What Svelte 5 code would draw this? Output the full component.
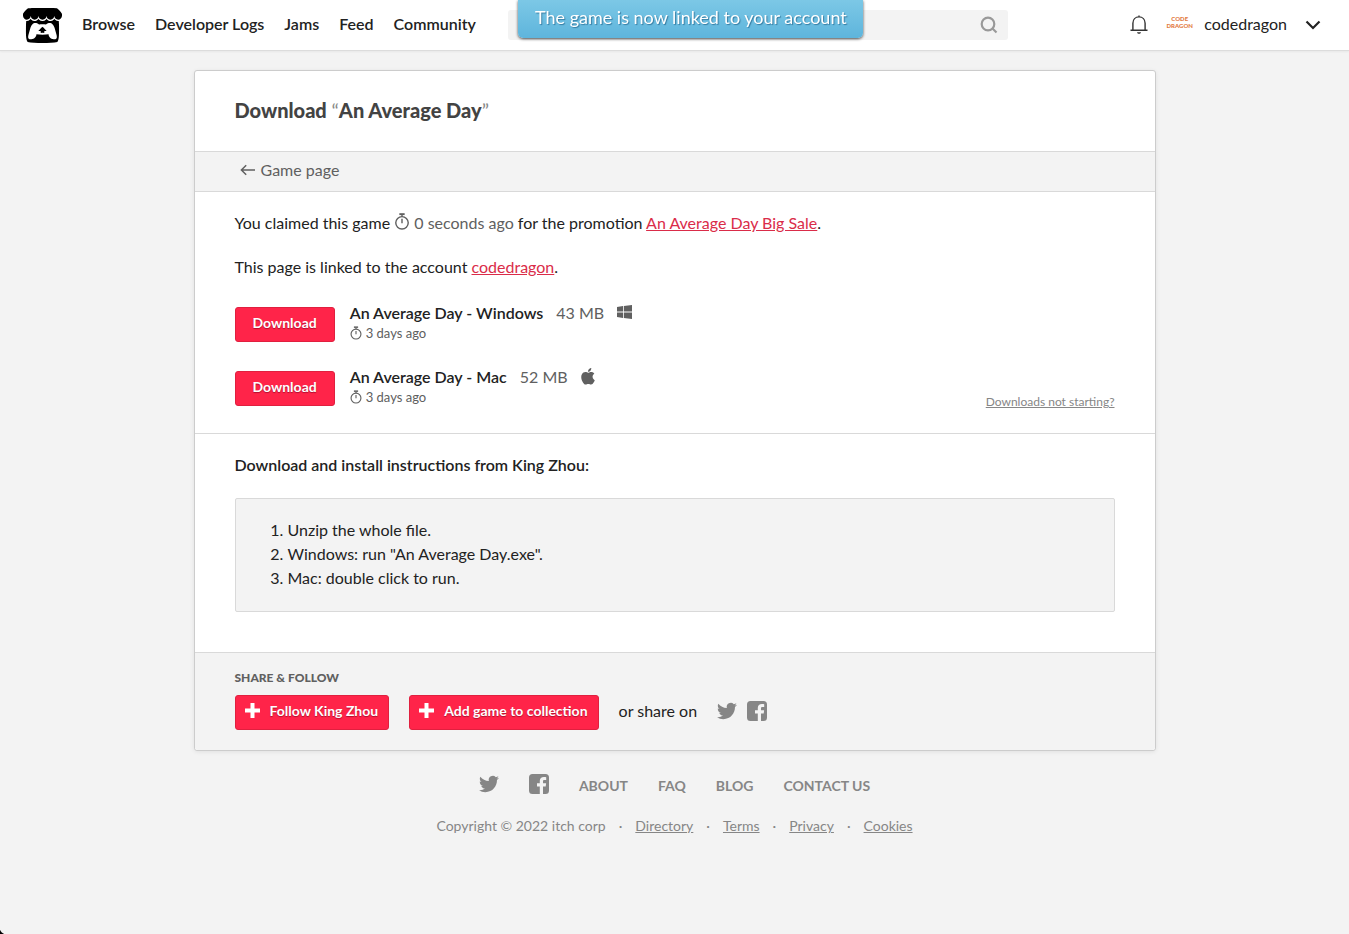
<script>
  const nav = ['Browse', 'Developer Logs', 'Jams', 'Feed', 'Community'];
  const uploads = [
    { name: 'An Average Day - Windows', size: '43 MB', platform: 'windows' },
    { name: 'An Average Day - Mac', size: '52 MB', platform: 'apple' }
  ];
  const steps = ['Unzip the whole file.', 'Windows: run "An Average Day.exe".', 'Mac: double click to run.'];
  const footerLinks = ['About', 'FAQ', 'Blog', 'Contact us'];
  const legalLinks = ['Directory', 'Terms', 'Privacy', 'Cookies'];
</script>

{#snippet stopwatch()}
  <svg class="stopwatch" viewBox="0 0 16 18" aria-hidden="true">
    <g fill="none" stroke="currentColor" stroke-width="1.5">
      <circle cx="8" cy="10.4" r="6.6" />
      <path d="M8 6.2v4.6M8 1.5v2.6" />
      <path d="M5.2 1.2h5.600" stroke-width="2" />
    </g>
  </svg>
{/snippet}

{#snippet twitter()}
  <svg class="social" viewBox="0 0 24 24" fill="currentColor" aria-hidden="true">
    <path d="M23.953 4.57a10 10 0 01-2.825.775 4.958 4.958 0 002.163-2.723c-.951.555-2.005.959-3.127 1.184a4.92 4.92 0 00-8.384 4.482C7.69 8.095 4.067 6.13 1.64 3.162a4.822 4.822 0 00-.666 2.475c0 1.71.87 3.213 2.188 4.096a4.904 4.904 0 01-2.228-.616v.06a4.923 4.923 0 003.946 4.827 4.996 4.996 0 01-2.212.085 4.936 4.936 0 004.604 3.417 9.867 9.867 0 01-6.102 2.105c-.39 0-.779-.023-1.17-.067a13.995 13.995 0 007.557 2.209c9.053 0 13.998-7.496 13.998-13.985 0-.21 0-.42-.015-.63A9.935 9.935 0 0024 4.59z" />
  </svg>
{/snippet}

{#snippet facebook()}
  <svg class="social" viewBox="0 0 20 20" fill="currentColor" aria-hidden="true">
    <path d="M3.5 0h13A3.5 3.5 0 0 1 20 3.5v13a3.5 3.5 0 0 1-3.5 3.5H14v-7.6h2.7l.4-3.1H14V7.4c0-.9.4-1.4 1.5-1.4h1.7V3.2c-.4-.1-1.300-.2-2.300-.2-2.500 0-4.100 1.500-4.100 4.100v2.200H8v3.100h2.800V20H3.500A3.500 3.500 0 0 1 0 16.500v-13A3.500 3.500 0 0 1 3.500 0z" />
  </svg>
{/snippet}

{#snippet plus()}
  <svg class="plus" viewBox="0 0 15 15" fill="currentColor" aria-hidden="true">
    <path d="M5.500 0h4v5.500H15v4H9.500V15h-4V9.500H0v-4h5.500z" />
  </svg>
{/snippet}

<header class="topbar">
  <a class="logo" href="#home" aria-label="itch.io">
    <svg viewBox="0 1.2 24 21.6" preserveAspectRatio="none" aria-hidden="true">
      <path d="M3.13 1.338C2.08 1.96.02 4.328 0 4.95v1.03c0 1.303 1.22 2.45 2.325 2.45 1.33 0 2.436-1.102 2.436-2.41 0 1.308 1.07 2.41 2.4 2.41 1.328 0 2.362-1.102 2.362-2.41 0 1.308 1.137 2.41 2.466 2.41h.024c1.33 0 2.466-1.102 2.466-2.41 0 1.308 1.034 2.41 2.363 2.41 1.33 0 2.4-1.102 2.4-2.41 0 1.308 1.106 2.41 2.435 2.41C22.78 8.43 24 7.282 24 5.98V4.95c-.02-.62-2.08-2.99-3.13-3.612-3.253-.114-5.508-.134-8.87-.133-3.362 0-7.945.053-8.87.133zm6.376 6.477a2.74 2.74 0 0 1-.468.602c-.5.49-1.19.795-1.947.795a2.786 2.786 0 0 1-1.95-.795c-.182-.178-.32-.37-.446-.59-.127.222-.303.412-.486.59a2.788 2.788 0 0 1-1.95.795c-.092 0-.187-.025-.264-.052-.107 1.113-.152 2.176-.168 2.95v.005l-.006 1.167c.02 2.334-.23 7.564 1.03 8.85 1.952.454 5.545.662 9.15.663 3.605 0 7.198-.21 9.15-.664 1.26-1.284 1.01-6.514 1.03-8.848l-.006-1.167v-.004c-.016-.775-.06-1.838-.168-2.95-.077.026-.172.052-.263.052a2.788 2.788 0 0 1-1.95-.795c-.184-.178-.36-.368-.486-.59-.127.22-.265.412-.447.59a2.786 2.786 0 0 1-1.95.794c-.76 0-1.446-.303-1.948-.793a2.74 2.74 0 0 1-.468-.602 2.738 2.738 0 0 1-.463.602 2.787 2.787 0 0 1-1.95.794h-.16a2.787 2.787 0 0 1-1.95-.793 2.738 2.738 0 0 1-.464-.602zm-2.004 2.59v.002c.795.002 1.5 0 2.373.953.687-.072 1.406-.108 2.125-.107.72 0 1.438.035 2.125.107.873-.953 1.578-.95 2.372-.953.376 0 1.876 0 2.92 2.934l1.123 4.028c.832 2.995-.266 3.068-1.636 3.07-2.03-.075-3.156-1.55-3.156-3.025-1.124.184-2.436.276-3.748.277-1.312 0-2.624-.093-3.748-.277 0 1.475-1.125 2.95-3.156 3.026-1.37-.004-2.468-.077-1.636-3.072l1.122-4.027c1.045-2.934 2.545-2.934 2.92-2.934zM12 12.714c-.002.002-2.14 1.964-2.523 2.662l1.4-.056v1.22c0 .056.56.033 1.123.007.562.026 1.124.05 1.124-.008v-1.22l1.4.055C14.138 14.677 12 12.713 12 12.713z" />
    </svg>
  </a>
  <nav>
    {#each nav as item}<a href="#{item}">{item}</a>{/each}
  </nav>
  <form class="search">
    <input type="text" aria-label="Search" />
    <button type="button" aria-label="Submit search">
      <svg viewBox="0 0 18 18" width="18" height="18" fill="none" stroke="#999" stroke-width="2.2" aria-hidden="true">
        <circle cx="8" cy="8" r="6.300" /><path d="M12.500 12.500l4 4" />
      </svg>
    </button>
  </form>
  <div class="user">
    <button class="bell" type="button" aria-label="Notifications">
      <svg viewBox="0 0 18 20" width="18" height="20" fill="none" stroke="#333" stroke-width="1.4" aria-hidden="true">
        <path d="M0.500 15.300h17M2.900 15.300V8.200C2.900 4.500 5.500 1.900 9 1.900s6.100 2.600 6.100 6.300v7.100M9 .6v1.300" />
        <path d="M7 17.300h4c-.3 1-1 1.500-2 1.500s-1.700-.5-2-1.500z" fill="#333" stroke="none" />
      </svg>
    </button>
    <a class="account" href="#account">
      <span class="avatar"><span>CODE</span><span>DRAGON</span></span>
      <span class="username">codedragon</span>
    </a>
    <button class="more" type="button" aria-label="Account menu">
      <svg viewBox="0 0 16 10" width="16" height="10" fill="none" stroke="#222" stroke-width="2.200" aria-hidden="true">
        <path d="M1.500 1.500L8 8l6.500-6.500" />
      </svg>
    </button>
  </div>
</header>

<div class="toast" role="status">The game is now linked to your account</div>

<main class="card">
  <h1>Download <span>“</span>An Average Day<span>”</span></h1>
  <div class="back">
    <a href="#game">
      <svg viewBox="0 0 15 12" width="15" height="12" fill="none" stroke="currentColor" stroke-width="1.500" aria-hidden="true">
        <path d="M15 6H1.500M6.200 1.200L1.400 6l4.800 4.800" />
      </svg>
      Game page
    </a>
  </div>

  <section class="downloads">
    <p>You claimed this game <span class="ago">{@render stopwatch()} 0 seconds ago</span> for the promotion <a href="#sale">An Average Day Big Sale</a>.</p>
    <p>This page is linked to the account <a href="#account">codedragon</a>.</p>
    <div class="uploads">
      <div class="list">
        {#each uploads as upload}
          <div class="upload">
            <button class="button" type="button">Download</button>
            <div class="info">
              <div class="title">
                <strong>{upload.name}</strong>
                <span class="size">{upload.size}</span>
                {#if upload.platform === 'windows'}
                  <svg viewBox="0 0 15 16" width="15" height="16" fill="currentColor" role="img" aria-label="Windows">
                    <path d="M0 2l6-.9v5.500H0zM6.800 1L15 0v6.600H6.800zM0 7.400h6v5.500L0 12zM6.800 7.400H15V14l-8.200-1z" />
                  </svg>
                {:else}
                  <svg viewBox="2 0 20 26" width="14" height="18" fill="currentColor" role="img" aria-label="Mac">
                    <path d="M12.152 6.896c-.948 0-2.415-1.078-3.96-1.04-2.04.027-3.91 1.183-4.961 3.014-2.117 3.675-.546 9.103 1.519 12.09 1.013 1.454 2.208 3.09 3.792 3.039 1.52-.065 2.09-.987 3.935-.987 1.831 0 2.35.987 3.96.948 1.637-.026 2.676-1.48 3.676-2.948 1.156-1.688 1.636-3.325 1.662-3.415-.039-.013-3.182-1.221-3.22-4.857-.026-3.04 2.48-4.494 2.597-4.559-1.429-2.09-3.623-2.324-4.39-2.376-2-.156-3.675 1.09-4.61 1.09zM15.53 3.83c.843-1.012 1.4-2.427 1.245-3.83-1.207.052-2.662.805-3.532 1.818-.78.896-1.454 2.338-1.273 3.714 1.338.104 2.715-.688 3.559-1.701" />
                  </svg>
                {/if}
              </div>
              <div class="date">{@render stopwatch()} 3 days ago</div>
            </div>
          </div>
        {/each}
      </div>
      <a class="help" href="#help">Downloads not starting?</a>
    </div>
  </section>

  <section class="instructions">
    <h2>Download and install instructions from King Zhou:</h2>
    <ol>
      {#each steps as step}<li>{step}</li>{/each}
    </ol>
  </section>

  <section class="share">
    <h3>Share &amp; Follow</h3>
    <div class="share-row">
      <button class="button with-icon" type="button">{@render plus()}Follow King Zhou</button>
      <button class="button with-icon" type="button">{@render plus()}Add game to collection</button>
      <span>or share on</span>
      <div class="share-icons">
        <a href="#twitter" aria-label="Share on Twitter">{@render twitter()}</a>
        <a href="#facebook" aria-label="Share on Facebook">{@render facebook()}</a>
      </div>
    </div>
  </section>
</main>

<footer>
  <div class="primary">
    <a href="#twitter" aria-label="Twitter">{@render twitter()}</a>
    <a href="#facebook" aria-label="Facebook">{@render facebook()}</a>
    {#each footerLinks as link}<a href="#{link}">{link}</a>{/each}
  </div>
  <div class="legal">
    <span>Copyright © 2022 itch corp</span>
    {#each legalLinks as link}
      <span>·</span><a href="#{link}">{link}</a>
    {/each}
  </div>
</footer>
<div class="corner"></div>

<style>
  :global(body) {
    margin: 0;
    background: #f3f3f3;
    color: #222;
    font-family: Lato, sans-serif;
    font-size: 16px;
    line-height: 24px;
  }
  a { color: inherit; text-decoration: none; }
  button { font-family: inherit; cursor: pointer; }
  svg { flex: none; }

  .topbar {
    display: flex;
    align-items: center;
    height: 50px;
    padding: 0 28px 0 23px;
    background: #fff;
    border-bottom: 1px solid #dcdcdc;
    box-shadow: 0 1px 2px rgba(0, 0, 0, 0.05);
  }
  .logo svg { display: block; width: 39px; height: 35px; }
  nav { display: flex; gap: 20px; margin: 0 32px 0 20px; padding-bottom: 2px; font-weight: 600; white-space: nowrap; }
  .search {
    display: flex;
    flex: 0 1 500px;
    height: 30px;
    background: #f3f3f3;
    border-radius: 3px;
  }
  .search input { flex: 1; min-width: 0; border: 0; background: transparent; }
  .search button, .bell, .more { display: flex; align-items: center; padding: 0; border: 0; background: none; }
  .search button { padding: 0 10px; }
  .user { display: flex; align-items: center; margin-left: auto; }
  .account { display: flex; align-items: center; gap: 12px; margin: 0 18px 0 19px; }
  .username { padding-bottom: 2px; }
  .avatar {
    display: flex;
    flex-direction: column;
    align-items: center;
    width: 25px;
    padding-bottom: 6px;
    color: #e27a3f;
    font-size: 6px;
    font-weight: 900;
    line-height: 7px;
  }

  .toast {
    position: fixed;
    top: 0;
    left: 518px;
    padding: 5px 16px 9px 17px;
    background: linear-gradient(#7cc8e6, #5eb5dc);
    border-radius: 0 0 5px 5px;
    box-shadow: 0 1px 3px rgba(0, 0, 0, 0.7);
    color: #fff;
    font-size: 18px;
    text-shadow: 1px 1px 1px rgba(0, 60, 100, 0.5);
  }

  .card {
    max-width: 960px;
    margin: 19px auto 0;
    background: #fff;
    border: 1px solid #ccc;
    border-radius: 3px;
    box-shadow: 0 1px 4px rgba(0, 0, 0, 0.08);
  }
  h1 {
    margin: 0;
    padding: 27px 40px 29px;
    color: #434343;
    font-size: 20px;
    font-weight: 900;
    line-height: 24px;
  }
  h1 span { color: #888; font-weight: 400; }
  .back { padding: 6px 45px 9px; background: #f3f3f3; border: solid #d9d9d9; border-width: 1px 0; color: #606060; }
  .back a { display: inline-flex; align-items: center; gap: 6px; }

  .downloads { padding: 19px 40px; border-bottom: 1px solid #d9d9d9; }
  p { margin: 0 0 20px; }
  p a { color: #da2c49; text-decoration: underline; }
  .ago, .size, .date, .title { color: #606060; }
  .stopwatch { width: 16px; height: 17px; vertical-align: -1px; }
  .uploads { display: flex; align-items: flex-end; justify-content: space-between; }
  .list { display: flex; flex-direction: column; gap: 20px; padding: 1px 0 6px; }
  .upload { display: flex; gap: 15px; align-items: flex-start; height: 44px; }
  .upload .button { margin-top: 7px; }
  .info { padding-top: 2px; }
  .button {
    height: 35px;
    padding: 0 17px 4px;
    background: #ff2449;
    border: 1px solid #e0203f;
    border-radius: 3px;
    color: #fff;
    font-size: 14px;
    font-weight: 700;
    text-shadow: 0 1px 1px rgba(120, 0, 30, 0.6);
  }
  .title { display: flex; align-items: center; gap: 13px; height: 22px; }
  .title strong { color: #222; font-weight: 600; }
  .date { display: flex; align-items: center; gap: 4px; font-size: 13px; line-height: 18px; }
  .date .stopwatch { width: 12px; height: 14px; }
  .help { color: #868686; font-size: 12px; line-height: 24px; text-decoration: underline; }

  .instructions { padding: 19px 40px 40px; }
  h2 { margin: 0 0 21px; font-size: 16px; font-weight: 600; line-height: 24px; }
  ol { margin: 0; padding: 19px 20px 21px 52px; background: #f3f3f3; border: 1px solid #d9d9d9; border-radius: 2px; }

  .share { padding: 15px 40px 20px; background: #f3f3f3; border-top: 1px solid #d9d9d9; border-radius: 0 0 3px 3px; }
  h3 { margin: 0 0 7px; color: #606060; font-size: 12px; font-weight: 900; line-height: 20px; text-transform: uppercase; }
  .share-row { display: flex; align-items: center; gap: 20px; }
  .share-row span, .share-icons { padding-bottom: 4px; }
  .with-icon { display: flex; align-items: center; gap: 10px; padding: 0 10px 4px 9px; }
  .plus { width: 15px; height: 15px; }
  .share-icons { display: flex; gap: 10px; color: #868686; }
  .social { display: block; width: 20px; height: 20px; }

  footer {
    display: flex;
    flex-direction: column;
    align-items: center;
    gap: 16px;
    padding: 23px 20px;
    color: #868686;
    font-size: 14px;
  }
  .primary { display: flex; align-items: flex-start; gap: 30px; font-weight: 700; text-transform: uppercase; }
  .legal { display: flex; gap: 13px; }
  .legal a { text-decoration: underline; }
  .corner {
    position: fixed;
    bottom: 0;
    left: 0;
    width: 7px;
    height: 7px;
    background: radial-gradient(circle at 100% 0, transparent 7px, #000 8px);
  }
</style>
